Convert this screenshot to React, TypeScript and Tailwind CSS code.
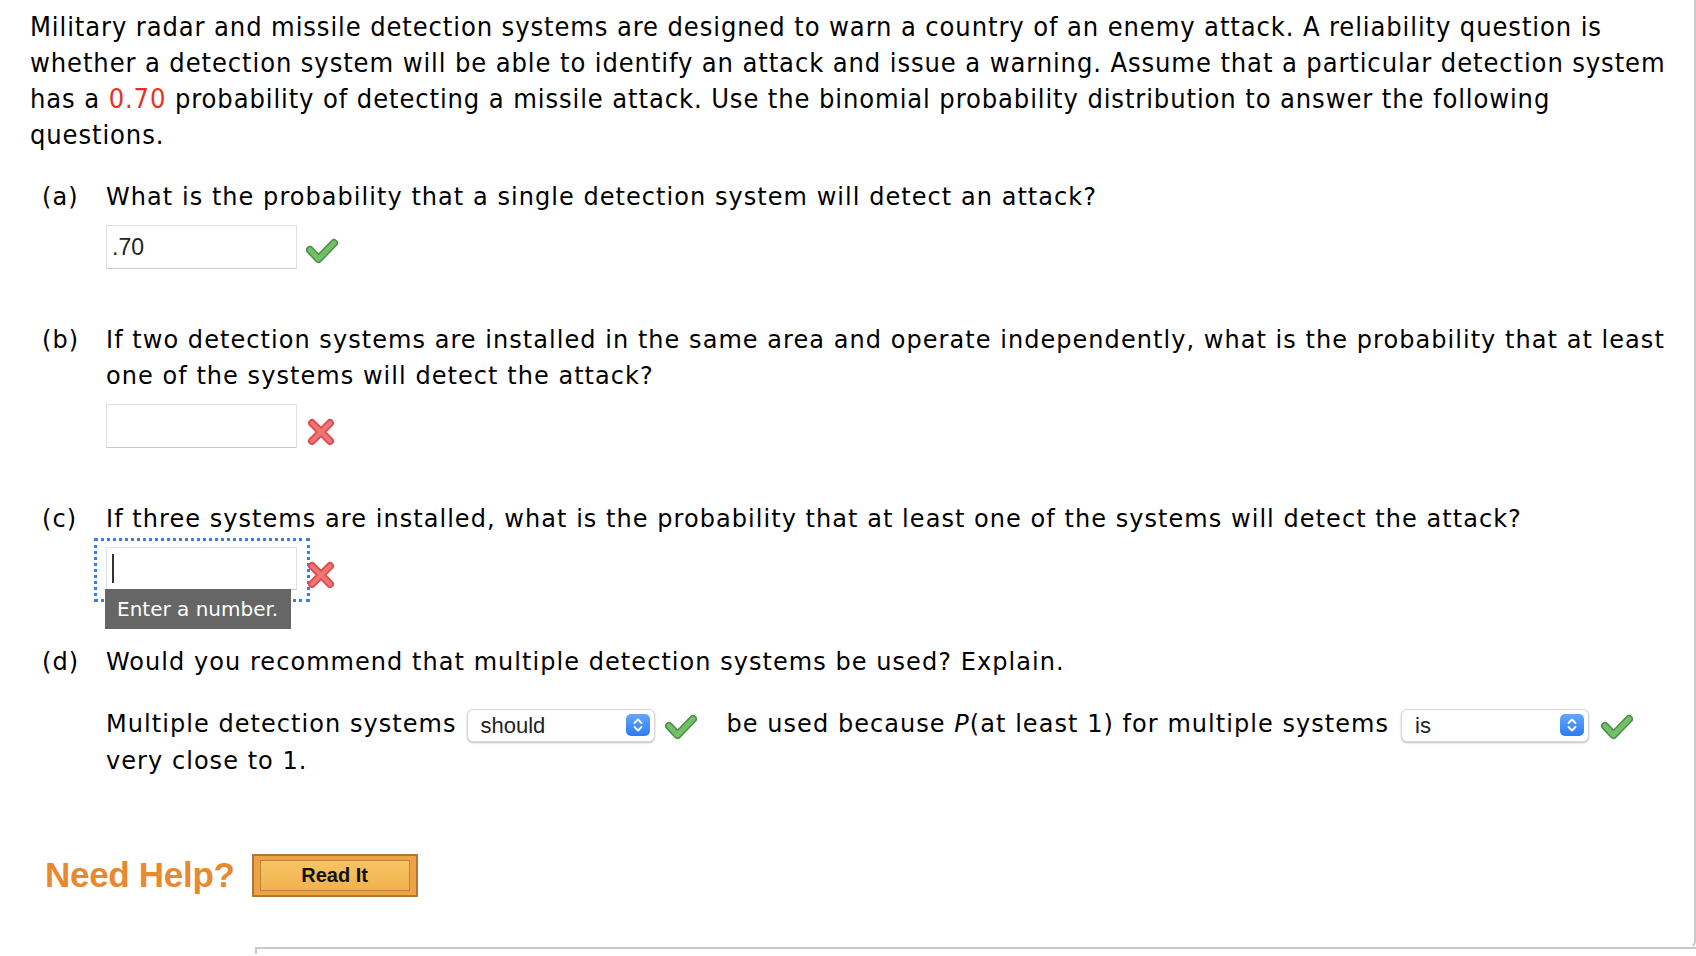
import React from "react";

const body = { fontFamily: '"DejaVu Sans", Verdana, sans-serif' };
const intro = { fontFamily: '"DejaVu Sans Condensed", "Liberation Sans", sans-serif', fontStretch: "condensed" as const };
const arial = { fontFamily: '"Liberation Sans", Arial, sans-serif' };

const Check: React.FC<{ className?: string }> = ({ className }) => (
  <svg width="32" height="27" viewBox="0 0 32 27" className={className}>
    <path d="M4 12 L12.5 21 L28 5" fill="none" stroke="#4a8f44" strokeWidth="8" strokeLinecap="round" strokeLinejoin="round" />
    <path d="M4 12 L12.5 21 L28 5" fill="none" stroke="#73bf69" strokeWidth="5" strokeLinecap="round" strokeLinejoin="round" />
  </svg>
);

const Cross: React.FC<{ className?: string }> = ({ className }) => (
  <svg width="28" height="28" viewBox="0 0 28 28" className={className}>
    <path d="M5 5 L23 23 M23 5 L5 23" fill="none" stroke="#dc5050" strokeWidth="8" strokeLinecap="round" />
    <path d="M5 5 L23 23 M23 5 L5 23" fill="none" stroke="#f07474" strokeWidth="4" strokeLinecap="round" />
  </svg>
);

const Select: React.FC<{ value: string; className?: string }> = ({ value, className }) => (
  <span
    className={`inline-flex items-center justify-between align-middle w-[188px] h-[33px] pl-[13px] pr-[4px] bg-white rounded-[6px] border border-[#d6d6d6] shadow-[0_1px_2px_rgba(0,0,0,0.25)] text-[22px] tracking-normal text-[#222] ${className ?? ""}`}
    style={arial}
  >
    <span>{value}</span>
    <span className="flex items-center justify-center w-[24px] h-[22px] rounded-[5px] bg-gradient-to-b from-[#64a6fa] to-[#2b7bf5]">
      <svg width="12" height="16" viewBox="0 0 12 16">
        <path d="M2.5 6 L6 2.5 L9.5 6 M2.5 10 L6 13.5 L9.5 10" fill="none" stroke="white" strokeWidth="1.8" strokeLinecap="round" strokeLinejoin="round" />
      </svg>
    </span>
  </span>
);

const Question: React.FC<{ label: string; children: React.ReactNode; className?: string }> = ({ label, children, className }) => (
  <div className={`flex pl-[12px] ${className ?? ""}`}>
    <div className="w-[64px] shrink-0">{label}</div>
    <div className="flex-1">{children}</div>
  </div>
);

const Input: React.FC<{ value?: string }> = ({ value }) => (
  <div
    className="w-[191px] h-[44px] border border-[#e0e0e0] border-b-[#c8c8c8] bg-white flex items-center pl-[5px] text-[23px] tracking-normal text-[#222]"
    style={arial}
  >
    {value}
  </div>
);

export default function App() {
  return (
    <div className="w-full min-h-screen bg-white text-black">
      <div className="h-[949px] border-r-2 border-b-2 border-r-[#c9c9c9] border-b-transparent rounded-br-[8px] pl-[30px] pr-[10px] pt-[9px]">
        <p className="text-[27px] leading-[36px] tracking-[0.9px] whitespace-nowrap" style={intro}>
          Military radar and missile detection systems are designed to warn a country of an enemy attack. A reliability question is
          <br />
          whether a detection system will be able to identify an attack and issue a warning. Assume that a particular detection system
          <br />
          has a <span className="text-[#e8311f]">0.70</span> probability of detecting a missile attack. Use the binomial probability distribution to answer the following
          <br />
          questions.
        </p>

        <div className="text-[24px] leading-[36px] tracking-[1.05px]" style={body}>
          <Question label="(a)" className="mt-[26px]">
            <div>What is the probability that a single detection system will detect an attack?</div>
            <div className="flex items-center mt-[10px]">
              <Input value=".70" />
              <Check className="ml-[9px] mt-[8px]" />
            </div>
          </Question>

          <Question label="(b)" className="mt-[53px]">
            <div className="whitespace-nowrap">
              If two detection systems are installed in the same area and operate independently, what is the probability that at least
              <br />
              one of the systems will detect the attack?
            </div>
            <div className="flex items-center mt-[10px]">
              <Input />
              <Cross className="ml-[10px] mt-[12px]" />
            </div>
          </Question>

          <Question label="(c)" className="mt-[53px]">
            <div>If three systems are installed, what is the probability that at least one of the systems will detect the attack?</div>
            <div className="flex items-center mt-[10px]">
              <div className="relative">
                <span className="absolute -left-[12px] -top-[9px] -right-[13px] -bottom-[12px] border-[3px] border-dotted border-[#3a7fdc]" />
                <div className="relative w-[191px] h-[43px] border border-[#e0e0e0] border-b-[#c8c8c8] bg-white flex items-center pl-[5px]">
                  <span className="block w-[2px] h-[29px] bg-[#333]" />
                </div>
                <div
                  className="absolute left-[-1px] top-[42px] w-[186px] h-[40px] bg-[#666] text-white text-[20px] tracking-normal flex items-center pl-[12px] z-10"
                  style={body}
                >
                  Enter a number.
                </div>
              </div>
              <Cross className="ml-[10px] mt-[12px] relative z-20" />
            </div>
          </Question>

          <Question label="(d)" className="mt-[54px]">
            <div>Would you recommend that multiple detection systems be used? Explain.</div>
            <div className="mt-[26px] leading-[37px] whitespace-nowrap">
              Multiple detection systems
              <Select value="should" className="ml-[10px]" />
              <Check className="inline-block align-middle ml-[10px] mt-[4px]" />
              <span className="ml-[30px]">
                be used because <i>P</i>(at least 1) for multiple systems
              </span>
              <Select value="is" className="ml-[12px]" />
              <Check className="inline-block align-middle ml-[12px] mt-[4px]" />
              <br />
              very close to 1.
            </div>
          </Question>
        </div>

        <div className="flex items-center mt-[69px] pl-[15px]">
          <span className="text-[35px] font-bold text-[#e8892f] tracking-[-0.3px]" style={arial}>
            Need Help?
          </span>
          <button
            className="ml-[17px] w-[166px] h-[43px] border-2 border-[#ad773a] bg-[#efa245] px-[6px] py-[4px] flex"
            style={arial}
          >
            <span className="flex-1 flex items-center justify-center border border-[#b98340] bg-gradient-to-b from-[#f7c466] to-[#f1b24c] text-[20px] font-bold text-[#111]">
              Read It
            </span>
          </button>
        </div>
      </div>
      <div className="flex">
        <div className="w-[255px] shrink-0" />
        <div className="flex-1 h-[7px] -mt-[2px] border-t-2 border-l-2 border-[#c9c9c9]" />
      </div>
    </div>
  );
}
